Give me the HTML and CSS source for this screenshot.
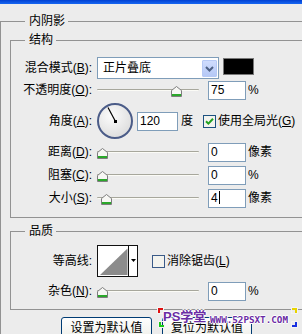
FILE: index.html
```html
<!DOCTYPE html>
<html>
<head>
    <meta charset="utf-8" />
    <title>图层样式 - 内阴影</title>
    <link rel="stylesheet" href="styles.css">
</head>
<body>
<div class="dialog">
    <div class="titlebar"></div>

    <fieldset class="group outer">
        <legend>内阴影</legend>

        <fieldset class="group inner">
            <legend>结构</legend>

            <div class="row row-blend">
                <label class="lbl">混合模式(<u>B</u>):</label>
                <div class="select">
                    <span>正片叠底</span>
                    <span class="select-btn">
                        <svg width="15" height="17" viewBox="0 0 15 17"><path d="M4 7 L7.5 10.5 L11 7" fill="none" stroke="#4d6185" stroke-width="2"/></svg>
                    </span>
                </div>
                <div class="swatch"></div>
            </div>

            <div class="row row-opacity">
                <label class="lbl">不透明度(<u>O</u>):</label>
                <div class="slider">
                    <div class="track"></div>
                    <svg class="thumb" style="left: 74px" width="11" height="11" viewBox="0 0 11 11"><path d="M0.5 4.5 L5.5 0.5 L10.5 4.5 V10.5 H0.5 Z" fill="#f7f7f4" stroke="#7d7d7d"/><rect x="1" y="8" width="9" height="2" fill="#2aa82a"/></svg>
                </div>
                <div class="num">75</div>
                <span class="unit">%</span>
            </div>

            <div class="row row-angle">
                <label class="lbl">角度(<u>A</u>):</label>
                <svg class="dial" width="36" height="36" viewBox="0 0 36 36">
                    <defs>
                        <radialGradient id="dialFill" cx="0.4" cy="0.35" r="0.75">
                            <stop offset="0" stop-color="#fcfcfc"/>
                            <stop offset="1" stop-color="#d9d9d9"/>
                        </radialGradient>
                    </defs>
                    <circle cx="18" cy="18" r="17" fill="url(#dialFill)" stroke="#4b5c88" stroke-width="2"/>
                    <line x1="18.5" y1="18.5" x2="11" y2="4.5" stroke="#000" stroke-width="1.2"/>
                    <rect x="17" y="17" width="3" height="3" fill="#000"/>
                </svg>
                <div class="num num-angle">120</div>
                <span class="unit">度</span>
                <svg class="check" width="13" height="13" viewBox="0 0 13 13"><rect x="0.5" y="0.5" width="12" height="12" fill="#f3f3ee" stroke="#1c5180"/><path d="M3 6.2 L5.4 8.6 L10 3.8" fill="none" stroke="#21a121" stroke-width="2"/></svg>
                <span class="check-text">使用全局光(<u>G</u>)</span>
            </div>

            <div class="row row-step">
                <label class="lbl">距离(<u>D</u>):</label>
                <div class="slider">
                    <div class="track"></div>
                    <svg class="thumb" style="left: 0px" width="11" height="11" viewBox="0 0 11 11"><path d="M0.5 4.5 L5.5 0.5 L10.5 4.5 V10.5 H0.5 Z" fill="#f7f7f4" stroke="#7d7d7d"/><rect x="1" y="8" width="9" height="2" fill="#2aa82a"/></svg>
                </div>
                <div class="num">0</div>
                <span class="unit">像素</span>
            </div>

            <div class="row row-step">
                <label class="lbl">阻塞(<u>C</u>):</label>
                <div class="slider">
                    <div class="track"></div>
                    <svg class="thumb" style="left: 0px" width="11" height="11" viewBox="0 0 11 11"><path d="M0.5 4.5 L5.5 0.5 L10.5 4.5 V10.5 H0.5 Z" fill="#f7f7f4" stroke="#7d7d7d"/><rect x="1" y="8" width="9" height="2" fill="#2aa82a"/></svg>
                </div>
                <div class="num">0</div>
                <span class="unit">%</span>
            </div>

            <div class="row row-step">
                <label class="lbl">大小(<u>S</u>):</label>
                <div class="slider">
                    <div class="track"></div>
                    <svg class="thumb" style="left: 4px" width="11" height="11" viewBox="0 0 11 11"><path d="M0.5 4.5 L5.5 0.5 L10.5 4.5 V10.5 H0.5 Z" fill="#f7f7f4" stroke="#7d7d7d"/><rect x="1" y="8" width="9" height="2" fill="#2aa82a"/></svg>
                </div>
                <div class="num">4<span class="caret"></span></div>
                <span class="unit">像素</span>
            </div>
        </fieldset>

        <fieldset class="group quality">
            <legend>品质</legend>

            <div class="row row-contour">
                <label class="lbl">等高线:</label>
                <svg class="contour" width="41" height="32" viewBox="0 0 41 32">
                    <rect x="0.5" y="0.5" width="40" height="31" fill="#fff" stroke="#111"/>
                    <path d="M3 30 L30.5 3.5 V30 Z" fill="#8c8c8c"/>
                    <line x1="31.5" y1="0" x2="31.5" y2="32" stroke="#111"/>
                    <path d="M34 14 H39 L36.5 17 Z" fill="#000"/>
                </svg>
                <svg class="check check-aa" width="13" height="13" viewBox="0 0 13 13"><rect x="0.5" y="0.5" width="12" height="12" fill="#f3f3ee" stroke="#3a5a88"/></svg>
                <span class="check-text">消除锯齿(<u>L</u>)</span>
            </div>

            <div class="row row-noise">
                <label class="lbl">杂色(<u>N</u>):</label>
                <div class="slider">
                    <div class="track"></div>
                    <svg class="thumb" style="left: 0px" width="11" height="11" viewBox="0 0 11 11"><path d="M0.5 4.5 L5.5 0.5 L10.5 4.5 V10.5 H0.5 Z" fill="#f7f7f4" stroke="#7d7d7d"/><rect x="1" y="8" width="9" height="2" fill="#2aa82a"/></svg>
                </div>
                <div class="num">0</div>
                <span class="unit">%</span>
            </div>
        </fieldset>

        <div class="buttons">
            <button class="btn btn-default">设置为默认值</button>
            <button class="btn btn-reset">复位为默认值</button>
        </div>
    </fieldset>

    <!-- watermark stamped over the dialog -->
    <div class="watermark">
        <span class="mk mk-tl"></span>
        <span class="mk mk-tr"></span>
        <span class="mk mk-bl"></span>
        <span class="mk mk-br"></span>
        <span class="wm-name">PS学堂</span>
        <span class="wm-url">WWW.52PSXT.COM</span>
    </div>
</div>
</body>
</html>
```

FILE: styles.css
```css
body {
    margin: 0;
    background: #ececec;
    color: #000;
    font: 12px/15px "Liberation Sans", "Noto Sans CJK SC", sans-serif;
}

.dialog {
    position: relative;
    width: 302px;
    height: 334px;
    overflow: hidden;
}

.titlebar {
    height: 4px;
    background: linear-gradient(#0040d2, #1767f2);
}

fieldset.group {
    margin: 0;
    min-width: 0;
    border: 1px solid #929292;
    border-right: none;
}

legend {
    padding: 0 3px 0 4px;
    line-height: 15px;
}

.outer {
    margin-top: 10px !important;
    padding: 4px 0 0 9px;
}

.outer > legend {
    margin-left: 15px;
}

.inner > legend,
.quality > legend {
    margin-left: 14px;
}

.inner {
    padding: 9px 0 9px 0;
}

.quality {
    margin-top: 6px !important;
    padding: 6px 0 8px 0;
}

.row {
    display: flex;
    align-items: center;
}

.lbl {
    flex: none;
    width: 81px;
    margin-right: 5px;
    text-align: right;
}

/* rows */
.row-blend { height: 22px; }
.row-opacity { height: 19px; margin-top: 2px; }
.row-angle { height: 36px; margin-top: 3px; }
.row-step { height: 19px; margin-top: 4px; }
.row-contour { height: 32px; }
.row-noise { height: 19px; margin-top: 5px; }

/* blend mode dropdown */
.select {
    box-sizing: border-box;
    display: flex;
    align-items: center;
    width: 122px;
    height: 22px;
    padding: 0 1px 0 5px;
    border: 1px solid #7f9db9;
    background: #fff;
}

.select-btn {
    box-sizing: border-box;
    display: flex;
    width: 15px;
    height: 17px;
    margin-left: auto;
    border: 1px solid #b6c9f5;
    border-radius: 1px;
    background: linear-gradient(#cfdcfd, #b5c8f6);
}

.select-btn svg {
    margin: -1px;
}

.swatch {
    box-sizing: border-box;
    align-self: flex-start;
    width: 31px;
    height: 17px;
    margin: 1px 0 0 4px;
    border: 1px solid #787878;
    background: #000;
}

/* sliders */
.slider {
    position: relative;
    flex: none;
    width: 102px;
    height: 19px;
    margin-right: 9px;
}

.track {
    height: 1px;
    margin-top: 8px;
    border-bottom: 1px solid #fbfbf6;
    border-radius: 1px;
    background: #a7a79c;
}

.thumb {
    position: absolute;
    top: 5px;
}

/* number fields */
.num {
    box-sizing: border-box;
    flex: none;
    width: 38px;
    height: 19px;
    padding-left: 2px;
    border: 1px solid #7f9db9;
    background: #fff;
    line-height: 17px;
}

.num-angle {
    width: 41px;
    margin-left: 4px;
}

.caret {
    display: inline-block;
    width: 1px;
    height: 13px;
    margin-left: 1px;
    vertical-align: -2px;
    background: #000;
}

.unit {
    margin-left: 2px;
}

.row-angle .unit {
    margin-left: 3px;
}

/* checkboxes */
.check {
    flex: none;
    margin-left: 10px;
}

.check-text {
    margin-left: 2px;
}

.check-aa {
    margin-left: 14px;
}

.contour {
    flex: none;
}

/* buttons */
.buttons {
    display: flex;
    gap: 10px;
    margin: 7px 0 0 51px;
}

.btn {
    box-sizing: border-box;
    height: 23px;
    padding: 0;
    border: 1px solid #003c74;
    border-radius: 3px;
    background: linear-gradient(#fefefe, #f1f1ec 85%, #dcdcd3);
    color: #000;
    font: inherit;
    line-height: 15px;
    text-align: center;
    align-items: flex-start;
}

.btn-default { width: 91px; }
.btn-reset { width: 90px; }

/* watermark */
.watermark {
    position: absolute;
    left: 158px;
    top: 308px;
    width: 139px;
    height: 19px;
}

.mk {
    position: absolute;
    width: 3px;
    height: 3px;
    outline: 1px solid #f4f4f4;
}

.mk-tl { left: 0; top: 0; border-top: 2px solid #e01010; border-left: 2px solid #e01010; }
.mk-tr { right: 0; top: 0; border-top: 2px solid #e8d400; border-right: 2px solid #e8d400; }
.mk-bl { left: 1px; bottom: 0; border-bottom: 2px solid #18c818; border-left: 2px solid #18c818; }
.mk-br { right: 0; bottom: 0; border-bottom: 2px solid #1830e0; border-right: 2px solid #1830e0; }

.wm-name,
.wm-url {
    position: absolute;
    color: #6a2ca4;
    font-weight: bold;
    text-shadow: 1px 0 #fff, -1px 0 #fff, 0 1px #fff, 0 -1px #fff;
}

.wm-name {
    left: 5px;
    top: 2px;
    font-size: 13px;
    line-height: 14px;
}

.wm-url {
    left: 52px;
    top: 7px;
    font: bold 9.25px/10px "DejaVu Sans Mono", monospace;
}
```
